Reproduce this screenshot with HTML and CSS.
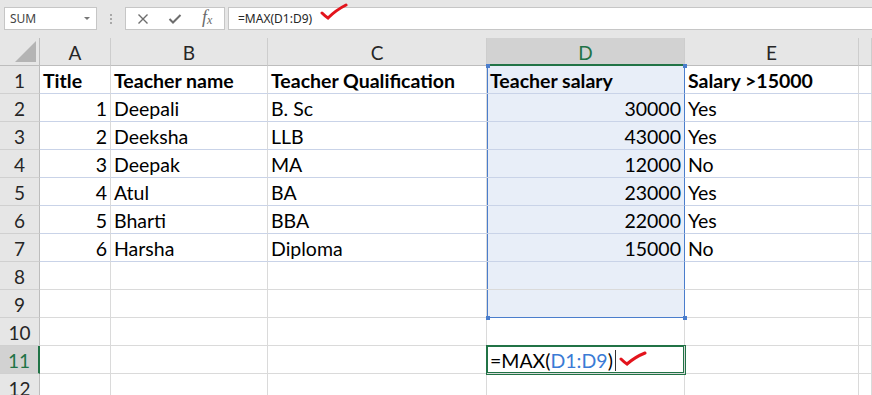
FILE: index.html
```html
<!DOCTYPE html>
<html lang="en">
<head>
<meta charset="UTF-8">
<title>Teacher salary - MAX</title>
<link rel="stylesheet" href="styles.css">
</head>
<body>

<!-- Name box + formula bar -->
<div class="toolbar">
    <div class="namebox">
        <span>SUM</span>
        <span class="caret"></span>
    </div>
    <div class="grip"><i></i><i></i><i></i></div>
    <div class="fxbox">
        <svg class="ico" width="12" height="12" viewBox="0 0 12 12"><path d="M1.5 1.5 L10.5 10.5 M10.5 1.5 L1.5 10.5" stroke="#6d6d6d" stroke-width="1.4" fill="none"/></svg>
        <svg class="ico" width="14" height="12" viewBox="0 0 14 12"><path d="M1.5 6 L5 9.5 L12.5 2" stroke="#6d6d6d" stroke-width="2" fill="none"/></svg>
        <span class="fx">f<sub>x</sub></span>
    </div>
    <div class="formula">
        <span>=MAX(D1:D9)</span>
        <svg class="tick" width="28" height="18" viewBox="0 0 28 18"><path d="M2 10 Q5 13 8 15 Q16 7 26 2" stroke="#e3141c" stroke-width="3" stroke-linecap="round" fill="none"/></svg>
    </div>
</div>

<div class="sheet" id="sheet"></div>

<script>
    const cols = ['A', 'B', 'C', 'D', 'E', ''];
    const data = [
        ['Title', 'Teacher name', 'Teacher Qualification', 'Teacher salary', 'Salary >15000'],
        [1, 'Deepali', 'B. Sc', 30000, 'Yes'],
        [2, 'Deeksha', 'LLB', 43000, 'Yes'],
        [3, 'Deepak', 'MA', 12000, 'No'],
        [4, 'Atul', 'BA', 23000, 'Yes'],
        [5, 'Bharti', 'BBA', 22000, 'Yes'],
        [6, 'Harsha', 'Diploma', 15000, 'No']
    ];
    const totalRows = 12;

    function renderSheet() {
        const sheet = document.getElementById('sheet');
        let html = '<div class="hdr corner"><span class="tri"></span></div>';
        cols.forEach(c => {
            html += '<div class="hdr col' + (c === 'D' ? ' picked' : '') + '">' + c + '</div>';
        });
        for (let r = 1; r <= totalRows; r++) {
            html += '<div class="hdr row' + (r === 11 ? ' picked' : '') + '">' + r + '</div>';
            const row = data[r - 1] || [];
            for (let c = 0; c < cols.length; c++) {
                let cls = 'cell';
                if (r <= 7) cls += ' blue-line';
                if (r === 1) cls += ' bold';
                // D1:D9 is the referenced range
                if (c === 3 && r <= 9) cls += ' sel';
                if (c === 3 && r === 1) cls += ' sel-top';
                if (c === 3 && r === 9) cls += ' sel-bottom';
                const v = row[c];
                if (typeof v === 'number') cls += ' num';
                let text = v === undefined ? '' : v;
                if (r === 11 && c === 3) {
                    cls += ' active';
                    text = '=MAX(<span class="ref">D1:D9</span>)<span class="cursor"></span>' +
                        '<svg class="tick" width="28" height="16" viewBox="0 0 28 16"><path d="M2 8 Q5 11 8 13 Q16 6 26 2" stroke="#e3141c" stroke-width="3" stroke-linecap="round" fill="none"/></svg>';
                }
                html += '<div class="' + cls + '">' + text + '</div>';
            }
        }
        sheet.innerHTML = html;
    }

    renderSheet();
</script>

</body>
</html>
```

FILE: styles.css
```css
/* Excel-like sheet */
body {
    margin: 0;
    background-color: #e6e6e6;
    font-family: 'Lato', sans-serif;
    overflow: hidden;
    height: 395px;
}
/* Toolbar styles */
.toolbar {
    height: 38px;
    box-sizing: border-box;
    padding: 7px 0 0 4px;
    display: flex;
    align-items: flex-start;
    font-family: 'Noto Sans', sans-serif;
}
.namebox {
    width: 93px;
    height: 23px;
    box-sizing: border-box;
    background-color: #FFFFFF;
    border: 1px solid #c6c6c6;
    display: flex;
    align-items: center;
    justify-content: space-between;
    padding: 0 6px 0 5px;
    font-size: 12px;
    color: #444444;
}
.caret {
    width: 0;
    height: 0;
    border-left: 3px solid transparent;
    border-right: 3px solid transparent;
    border-top: 3px solid #777777;
}
.grip {
    width: 28px;
    height: 23px;
    display: flex;
    flex-direction: column;
    align-items: center;
    justify-content: center;
    gap: 2px;
}
.grip i {
    width: 2px;
    height: 2px;
    background-color: #a8a8a8;
}
.fxbox {
    width: 100px;
    height: 23px;
    box-sizing: border-box;
    background-color: #FFFFFF;
    border: 1px solid #c6c6c6;
    display: flex;
    align-items: center;
    padding-left: 11px;
    gap: 19px;
}
.fx {
    font-family: 'Liberation Serif', serif;
    font-style: italic;
    font-size: 18px;
    color: #6a6a6a;
    margin: -3px 0 0 1px;
}
.fx sub {
    font-size: 12px;
    vertical-align: -1px;
}
.formula {
    flex: 1;
    height: 23px;
    box-sizing: border-box;
    margin-left: 3px;
    background-color: #FFFFFF;
    border: 1px solid #c6c6c6;
    border-right: none;
    display: flex;
    align-items: center;
    padding-left: 9px;
    font-size: 12px;
    color: #262626;
}
.formula .tick {
    margin: -14px 0 0 8px;
}
/* Grid styles */
.sheet {
    display: grid;
    grid-template-columns: 40px 71px 157px 219px 198px 174px 1fr;
    grid-template-rows: repeat(13, 28px);
    background-color: #FFFFFF;
}
.hdr {
    box-sizing: border-box;
    background-color: #e6e6e6;
    color: #262626;
    font-size: 19px;
    display: flex;
    align-items: center;
    justify-content: center;
}
.hdr.col {
    border-right: 1px solid #cdcdcd;
    border-bottom: 1px solid #bdbdbd;
    padding-top: 2px;
}
.hdr.row {
    border-right: 1px solid #bdbdbd;
    border-bottom: 1px solid #d0d0d0;
    padding-top: 2px;
}
.hdr.corner {
    border-right: 1px solid #bdbdbd;
    border-bottom: 1px solid #bdbdbd;
    align-items: flex-end;
    justify-content: flex-end;
    padding: 0 3px 3px 0;
}
.tri {
    width: 0;
    height: 0;
    border-left: 21px solid transparent;
    border-bottom: 21px solid #b4b4b4;
}
.hdr.picked {
    background-color: #d2d2d2;
    color: #217346;
}
.hdr.col.picked {
    border-bottom: 2px solid #217346;
}
.hdr.row.picked {
    border-right: 2px solid #217346;
}
.cell {
    box-sizing: border-box;
    border-right: 1px solid #dadada;
    border-bottom: 1px solid #dadada;
    font-size: 19.5px;
    color: #000000;
    padding: 2px 4px 0 3px;
    display: flex;
    align-items: center;
    white-space: nowrap;
    min-width: 0;
}
.cell.blue-line {
    border-bottom-color: #c9d3e8;
}
.cell.bold {
    font-weight: bold;
}
.cell.num {
    justify-content: flex-end;
    padding-right: 3px;
}
/* Referenced range D1:D9 */
.cell.sel {
    position: relative;
    background-color: #e8eef8;
    border-right-color: #4a7dcc;
    box-shadow: inset 1px 0 0 #4a7dcc;
}
.cell.sel-bottom {
    border-bottom-color: #4a7dcc;
}
.cell.sel-top::before,
.cell.sel-top::after,
.cell.sel-bottom::before,
.cell.sel-bottom::after {
    content: '';
    position: absolute;
    width: 4px;
    height: 4px;
    background-color: #4a7dcc;
}
.cell.sel-top::before { left: -1px; top: -2px; }
.cell.sel-top::after { right: -3px; top: -2px; }
.cell.sel-bottom::before { left: -1px; bottom: -3px; }
.cell.sel-bottom::after { right: -3px; bottom: -3px; }
/* Active cell D11 */
.cell.active {
    position: relative;
    z-index: 2;
    box-shadow: 0 0 0 1px #217346, inset 0 0 0 1px #217346;
    padding-left: 3px;
}
.ref {
    color: #3a7bd5;
}
.cursor {
    width: 1px;
    height: 21px;
    background-color: #333333;
    margin-left: 2px;
}
.cell .tick {
    margin: -4px 0 0 3px;
}
```
